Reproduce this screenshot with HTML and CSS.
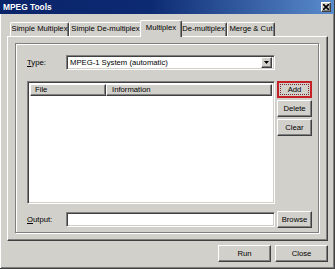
FILE: index.html
```html
<!DOCTYPE html>
<html lang="en">
<head>
  <meta charset="UTF-8" />
  <title>MPEG Tools</title>
  <link rel="stylesheet" href="styles.css">
</head>
<body>
  <div class="window">
    <div class="titlebar">
      <span class="title">MPEG Tools</span>
      <span class="close-btn">
        <svg width="6" height="6" viewBox="0 0 6 6"><path d="M0 0L6 6M6 0L0 6" stroke="#000" stroke-width="1.6"/></svg>
      </span>
    </div>

    <div class="client">
      <div class="tabs">
        <div class="tab t1">Simple Multiplex</div>
        <div class="tab t2">Simple De-multiplex</div>
        <div class="tab t3 active">Multiplex</div>
        <div class="tab t4">De-multiplex</div>
        <div class="tab t5">Merge &amp; Cut</div>
      </div>

      <div class="panel">
        <div class="group">
          <div class="row">
            <label class="lbl"><u>T</u>ype:</label>
            <div class="combo">
              <span class="combo-text">MPEG-1 System (automatic)</span>
              <span class="combo-btn">
                <svg width="5" height="3" viewBox="0 0 5 3"><path d="M0 0h5L2.5 3z" fill="#000"/></svg>
              </span>
            </div>
          </div>

          <div class="list-row">
            <div class="list">
              <div class="list-head">
                <div class="col col-file">File</div>
                <div class="col col-info">Information</div>
              </div>
            </div>
            <div class="side-btns">
              <button class="btn btn-default">Add</button>
              <button class="btn">Delete</button>
              <button class="btn">Clear</button>
            </div>
          </div>

          <div class="row row-output">
            <label class="lbl"><u>O</u>utput:</label>
            <div class="field"></div>
            <button class="btn btn-browse">Browse</button>
          </div>
        </div>
      </div>

      <div class="footer">
        <button class="btn btn-wide">Run</button>
        <button class="btn btn-wide">Close</button>
      </div>
    </div>
  </div>
</body>
</html>
```

FILE: styles.css
```css
body { margin: 0; background: #d2d0cb; font-family: "Liberation Sans", Arial, sans-serif; font-size: 7.7px; color: #000; }

.window { width: 335px; height: 269px; box-sizing: border-box; background: #d2d0cb; border-right: 1px solid #404040; border-bottom: 1px solid #404040; box-shadow: inset 1px 1px #fff, inset -1px -1px #808080; }

.titlebar { height: 14px; display: flex; align-items: center; justify-content: space-between; padding: 0 3px 0 3px; background: linear-gradient(to right, #0a246a 0%, #0c2a72 45%, #5a8ccc 100%); }
.title { color: #fff; font-weight: bold; font-size: 8.4px; }
.close-btn { width: 10px; height: 10px; box-sizing: border-box; display: flex; align-items: center; justify-content: center; background: #d2d0cb; border: 1px solid; border-color: #fff #404040 #404040 #fff; box-shadow: inset -1px -1px #808080; }

.client { padding: 6px 6px 0 7px; }

.tabs { display: flex; align-items: flex-end; height: 16px; padding-left: 3px; }
.tab { height: 14px; box-sizing: border-box; border: 1px solid; border-bottom: none; border-color: #fff #404040 #404040 #fff; border-radius: 2px 2px 0 0; box-shadow: inset -1px 0 #808080; text-align: center; line-height: 12px; white-space: nowrap; }
.t1 { width: 59px; }
.t2 { width: 73px; }
.t3 { width: 42px; }
.t4 { width: 47px; }
.t5 { width: 48px; }
.tab.active { height: 17px; margin: 0 -2px -1px; position: relative; z-index: 1; background: #d2d0cb; line-height: 13px; }

.panel { height: 205px; box-sizing: border-box; display: flex; padding: 6px 8px 7px 7px; border: 1px solid; border-color: #fff #404040 #404040 #fff; box-shadow: inset -1px -1px #808080; }
.group { flex: 1; padding: 11px 5px 0 11px; border: 1px solid #808080; box-shadow: 1px 1px #fff, inset 1px 1px #fff; }

.row { display: flex; align-items: center; height: 15px; }
.lbl { width: 39px; }

.combo, .field, .list { box-sizing: border-box; background: #fff; border: 1px solid; border-color: #808080 #fff #fff #808080; box-shadow: inset 1px 1px #404040, inset -1px -1px #d2d0cb; }
.combo { width: 209px; height: 15px; display: flex; align-items: center; justify-content: space-between; padding: 0 2px 0 3px; }
.combo-btn { width: 11px; height: 11px; box-sizing: border-box; display: flex; align-items: center; justify-content: center; background: #d2d0cb; border: 1px solid; border-color: #fff #404040 #404040 #fff; box-shadow: inset -1px -1px #808080; }

.list-row { display: flex; margin-top: 11px; }
.list { width: 248px; height: 123px; padding: 2px; }
.list-head { display: flex; height: 12px; }
.col { box-sizing: border-box; background: #d2d0cb; border: 1px solid; border-color: #fff #404040 #404040 #fff; box-shadow: inset -1px -1px #808080; line-height: 10px; padding-left: 4px; }
.col-file { width: 76px; }
.col-info { flex: 1; padding-left: 5px; }

.side-btns { display: flex; flex-direction: column; gap: 2px; margin-left: 2px; }

.btn { width: 35px; height: 17px; box-sizing: border-box; padding: 0; margin: 0; font: inherit; color: #000; background: #d2d0cb; border: 1px solid; border-color: #fff #404040 #404040 #fff; box-shadow: inset -1px -1px #808080; }
.btn-default { border: 2px solid #c42126; box-shadow: none; outline: 1px dotted #7a2a2a; outline-offset: -4px; }

.row-output { margin-top: 7px; height: 17px; }
.field { width: 209px; height: 15px; }
.btn-browse { margin-left: 2px; }

.footer { display: flex; justify-content: flex-end; gap: 4px; margin-top: 4px; }
.btn-wide { width: 53px; }
```
